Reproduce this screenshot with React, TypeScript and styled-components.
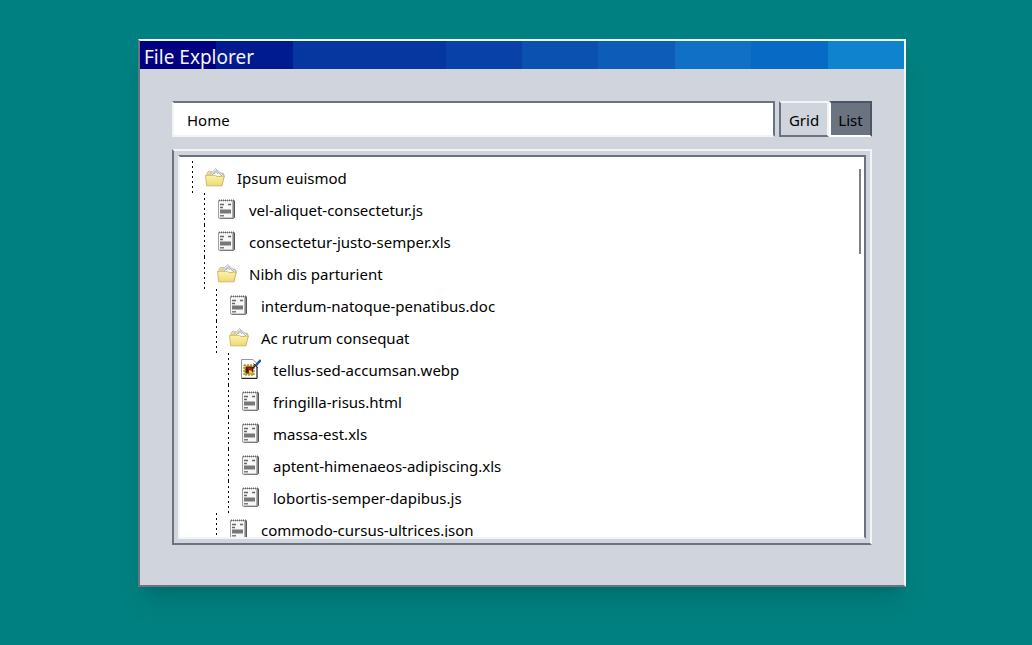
import React from 'react';
import styled, { createGlobalStyle } from 'styled-components';

const Global = createGlobalStyle`
  *, *::before, *::after { box-sizing: border-box; }
  body {
    margin: 0;
    background: #008080;
    color: #000;
    font: 15px/24px "Noto Sans", "Open Sans", sans-serif;
  }
`;

const Desktop = styled.main`
  min-height: 100vh;
  display: flex;
  justify-content: center;
  align-items: center;
  padding: 0 0 19px 12px;
`;

const Window = styled.section`
  width: 100%;
  max-width: 768px;
  background: #d0d4dc;
  border: 2px solid;
  border-color: #f3f4f6 #f3f4f6 #6b7280 #6b7280;
  box-shadow: 0 20px 25px -5px rgba(0, 0, 0, 0.1), 0 8px 10px -6px rgba(0, 0, 0, 0.1);
`;

const TitleBar = styled.header`
  height: 28px;
  padding: 0 4px;
  background: linear-gradient(
    to right,
    #000080 10%, #001a90 10% 20%, #0637a1 20% 40%, #0842a9 40% 50%,
    #0b51b0 50% 60%, #0c5cb8 60% 70%, #1070c5 70% 80%, #076bc5 80% 90%,
    #1083cf 90%
  );
`;

const Title = styled.h1`
  margin: 0;
  color: #f3f4f6;
  font-size: 19px;
  font-weight: 400;
  line-height: 32px;
`;

const Content = styled.div`
  display: flex;
  flex-direction: column;
  gap: 12px;
  padding: 32px 32px 40px;
`;

const Toolbar = styled.div`
  display: flex;
  gap: 4px;
`;

const PathInput = styled.input`
  flex: 1;
  min-width: 0;
  height: 36px;
  padding: 2px 13px 0;
  background: #fff;
  color: inherit;
  font: inherit;
  outline: none;
  border: 2px solid;
  border-color: #6b7280 #6b7280 #f3f4f6 #f3f4f6;
`;

const ViewSwitch = styled.div`
  display: flex;
`;

const ViewButton = styled.button<{ $active?: boolean; $width: number }>`
  width: ${p => p.$width}px;
  height: 36px;
  padding: 2px 0 0;
  color: #000;
  font: inherit;
  background: ${p => (p.$active ? '#6b7280' : '#d0d4dc')};
  border: 2px solid;
  border-color: ${p => (p.$active ? '#4b5563 #4b5563 #fff #fff' : '#f3f4f6 #f3f4f6 #6b7280 #6b7280')};
`;

const Panel = styled.div`
  padding: 4px;
  border: 2px solid;
  border-color: #f3f4f6 #f3f4f6 #6b7280 #6b7280;
`;

const Well = styled.div`
  position: relative;
  height: 384px;
  padding: 4px 12px 0;
  overflow: hidden;
  background: #fff;
  border: 2px solid;
  border-color: #6b7280 #6b7280 #f3f4f6 #f3f4f6;
`;

const ScrollThumb = styled.span`
  position: absolute;
  top: 12px;
  right: 3px;
  width: 2px;
  height: 85px;
  background: #808080;
`;

const Tree = styled.ul`
  margin: 0;
  padding: 0;
  list-style: none;
`;

const Row = styled.li<{ $depth: number }>`
  display: flex;
  align-items: center;
  gap: 12px;
  height: 32px;
  margin-left: ${p => p.$depth * 12}px;
  padding-left: 13px;
  background: repeating-linear-gradient(to bottom, #000 0 2px, transparent 2px 5px) left top / 1px 100% no-repeat;

  svg { flex: none; }
`;

const Name = styled.span`
  padding-top: 2px;
  white-space: nowrap;
`;

const FolderIcon = () => (
  <svg width="20" height="20" viewBox="0 0 20 20" aria-hidden="true">
    <defs>
      <linearGradient id="folder" x1="0" y1="0" x2="0" y2="1">
        <stop offset="0" stopColor="#fbf3a8" />
        <stop offset="1" stopColor="#efd978" />
      </linearGradient>
    </defs>
    <path d="M2 17V6l1-1.500h4L8.500 6H18l1 1-2 11z" fill="#e6dca0" stroke="#c3b676" strokeWidth=".7" />
    <path d="M4 9l6.500-7.500L19.500 9l-1 3H4z" fill="#f4f5f7" stroke="#a9abad" strokeWidth=".7" />
    <path d="M6 9l5-5.500L17 9" fill="#fff" stroke="#85888c" strokeWidth=".8" />
    <path d="M9 7l1.800-2 2.200 2" fill="none" stroke="#a0a4aa" strokeWidth=".8" />
    <path d="M.5 8.300h10l1.500 1.200h4.500l2.700-.8L17 18.800H1.600z" fill="url(#folder)" stroke="#c6ae55" strokeWidth=".8" />
  </svg>
);

const FileIcon = () => (
  <svg width="20" height="20" viewBox="0 0 20 20" aria-hidden="true">
    <path d="M2 18.500L3 20h13l2-1.500V2L17 1z" fill="#555" />
    <path d="M1.500 1.500H16v17.500H1.500z" fill="#f8f8f8" stroke="#a0a0a0" />
    <path d="M16 2.500v16" stroke="#999" />
    <path d="M2.500 .5v1.800M4.500 .5v1.800M6.500 .5v1.800M8.500 .5v1.800M10.500 .5v1.800M12.500 .5v1.800M14.500 .5v1.800M16.500 .5v1.800" stroke="#666" />
    <path d="M3 5.500h4M11 5.500h3M3 8.500h3" stroke="#666" strokeWidth="1.400" />
    <path d="M3 10.500h11v4H3z" fill="#777" />
    <path d="M3 16.800h4" stroke="#666" strokeWidth="1.300" />
  </svg>
);

const ImageIcon = () => (
  <svg width="20" height="20" viewBox="0 0 20 20" aria-hidden="true">
    <path d="M.5 .5H12l4 4v14.500H.5z" fill="#fff" stroke="#999" />
    <path d="M.5 19.500h15.500V8" fill="none" stroke="#222" />
    <path d="M3 6h10v10H3z" fill="#edcf45" stroke="#806d19" strokeDasharray="2 1" />
    <path d="M5 8h6.500v6H5z" fill="#b51c18" stroke="#561510" />
    <path d="M5 8l3 3-3 3z" fill="#252b20" />
    <path d="M8 11l3 1 1 2.500H8z" fill="#edcf45" />
    <path d="M19.700 1l-5 5.500" stroke="#2451ad" strokeWidth="2.400" />
    <path d="M14.500 6.500L11 10" stroke="#222" strokeWidth="1.500" />
    <path d="M12.500 4.500l4 4" stroke="#222" />
  </svg>
);

const icons = { folder: FolderIcon, file: FileIcon, image: ImageIcon };

const entries: { name: string; depth: number; kind: keyof typeof icons }[] = [
  { name: 'Ipsum euismod', depth: 0, kind: 'folder' },
  { name: 'vel-aliquet-consectetur.js', depth: 1, kind: 'file' },
  { name: 'consectetur-justo-semper.xls', depth: 1, kind: 'file' },
  { name: 'Nibh dis parturient', depth: 1, kind: 'folder' },
  { name: 'interdum-natoque-penatibus.doc', depth: 2, kind: 'file' },
  { name: 'Ac rutrum consequat', depth: 2, kind: 'folder' },
  { name: 'tellus-sed-accumsan.webp', depth: 3, kind: 'image' },
  { name: 'fringilla-risus.html', depth: 3, kind: 'file' },
  { name: 'massa-est.xls', depth: 3, kind: 'file' },
  { name: 'aptent-himenaeos-adipiscing.xls', depth: 3, kind: 'file' },
  { name: 'lobortis-semper-dapibus.js', depth: 3, kind: 'file' },
  { name: 'commodo-cursus-ultrices.json', depth: 2, kind: 'file' },
];

export default function App() {
  return (
    <Desktop>
      <Global />
      <Window>
        <TitleBar>
          <Title>File Explorer</Title>
        </TitleBar>
        <Content>
          <Toolbar>
            <PathInput aria-label="Path" defaultValue="Home" />
            <ViewSwitch>
              <ViewButton type="button" $width={50}>Grid</ViewButton>
              <ViewButton type="button" $width={43} $active aria-pressed="true">List</ViewButton>
            </ViewSwitch>
          </Toolbar>
          <Panel>
            <Well>
              <Tree>
                {entries.map(({ name, depth, kind }) => {
                  const Icon = icons[kind];
                  return (
                    <Row key={name} $depth={depth}>
                      <Icon />
                      <Name>{name}</Name>
                    </Row>
                  );
                })}
              </Tree>
              <ScrollThumb />
            </Well>
          </Panel>
        </Content>
      </Window>
    </Desktop>
  );
}
